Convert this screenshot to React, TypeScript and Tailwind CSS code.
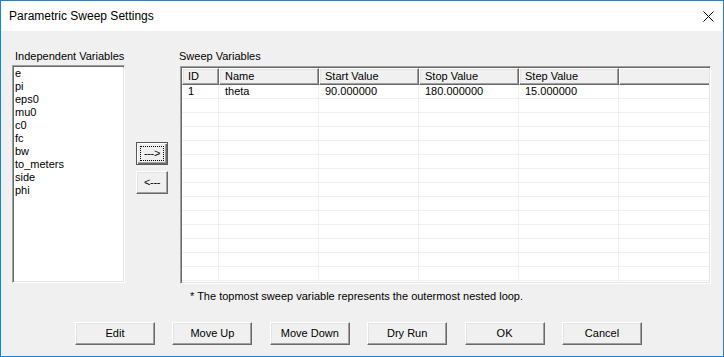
import React from 'react';

const variables = ['e', 'pi', 'eps0', 'mu0', 'c0', 'fc', 'bw', 'to_meters', 'side', 'phi'];

const columns = [
  { header: 'ID', width: 'w-[37px]' },
  { header: 'Name', width: 'w-[100px]' },
  { header: 'Start Value', width: 'w-[100px]' },
  { header: 'Stop Value', width: 'w-[100px]' },
  { header: 'Step Value', width: 'w-[100px]' },
];

const rows = [['1', 'theta', '90.000000', '180.000000', '15.000000']];

const raised =
  'bg-[#f0f0f0] border border-t-white border-l-white border-r-[#696969] border-b-[#696969] shadow-[inset_-1px_-1px_#a0a0a0,inset_1px_1px_#e3e3e3]';

const sunken =
  'bg-white border border-t-[#a0a0a0] border-l-[#a0a0a0] border-r-white border-b-white shadow-[inset_1px_1px_#696969,inset_-1px_-1px_#e3e3e3]';

function DlgButton({ label }: { label: string }) {
  return (
    <button className={`${raised} w-[80px] h-[23px] flex items-center justify-center text-[11px] leading-none whitespace-nowrap`}>
      {label}
    </button>
  );
}

export default function App() {
  return (
    <div className="w-[724px] h-[357px] border border-[#1883d7] flex flex-col bg-[#f0f0f0] overflow-hidden font-['Liberation_Sans',Arial,sans-serif] text-[11px] text-black">
      {/* title bar */}
      <div className="h-[30px] shrink-0 bg-white flex items-center justify-between pl-[8px] pr-[8px]">
        <span className="text-[12px]">Parametric Sweep Settings</span>
        <svg width="11" height="11" viewBox="0 0 11 11" className="mr-[1px]">
          <path d="M0.5 0.5 L10.5 10.5 M10.5 0.5 L0.5 10.5" stroke="#000" strokeWidth="1" />
        </svg>
      </div>

      <div className="flex-1 pt-[19px]">
        <div className="flex pl-[11px]">
          {/* independent variables */}
          <div className="w-[113px] flex flex-col">
            <div className="h-[13px] leading-[13px] pl-[3px]">Independent Variables</div>
            <div className={`${sunken} mt-[2px] h-[218px] pt-[1px] pl-[2px]`}>
              {variables.map((v) => (
                <div key={v} className="h-[13px] leading-[13px]">{v}</div>
              ))}
            </div>
          </div>

          {/* add / remove */}
          <div className="ml-[11px] w-[32px] flex flex-col">
            <button className="mt-[92px] h-[23px] w-[32px] p-[3px] bg-[#f0f0f0] border border-[#5a5a5a] shadow-[inset_1px_1px_white,inset_-1px_-1px_#696969,inset_-2px_-2px_#a0a0a0]">
              <span className="w-full h-full flex items-center justify-center border border-dotted border-black text-[11px] leading-none whitespace-nowrap tracking-[-0.3px]">
                ---&gt;
              </span>
            </button>
            <button className={`${raised} mt-[6px] h-[23px] w-[32px] flex items-center justify-center text-[11px] leading-none whitespace-nowrap tracking-[-0.3px]`}>
              &lt;---
            </button>
          </div>

          {/* sweep variables */}
          <div className="ml-[12px] flex flex-col">
            <div className="h-[13px] leading-[13px] -ml-[1px]">Sweep Variables</div>
            <div className={`${sunken} mt-[3px] w-[531px] h-[218px] p-[1px] overflow-hidden`}>
              <div className="flex h-[17px]">
                {columns.map((c) => (
                  <div key={c.header} className={`${raised} ${c.width} h-[17px] pl-[5px] flex items-center leading-none`}>
                    {c.header}
                  </div>
                ))}
                <div className="flex-1 h-[17px] bg-[#f0f0f0] border-l border-t border-b border-t-white border-l-white border-b-[#696969] shadow-[inset_0_-1px_#a0a0a0]" />
              </div>
              {Array.from({ length: 15 }).map((_, i) => (
                <div key={i} className="flex h-[14px] border-b border-[#f0f0f0]">
                  {columns.map((c, j) => (
                    <div key={j} className={`${c.width} h-full pl-[6px] flex items-center border-r border-[#f0f0f0] leading-none`}>
                      {rows[i] ? rows[i][j] : ''}
                    </div>
                  ))}
                  <div className="flex-1" />
                </div>
              ))}
            </div>
            <div className="mt-[6px] h-[13px] leading-[13px] pl-[10px]">
              * The topmost sweep variable represents the outermost nested loop.
            </div>
          </div>
        </div>

        {/* dialog buttons */}
        <div className="mt-[19px] pl-[74px] flex gap-[17.4px]">
          {['Edit', 'Move Up', 'Move Down', 'Dry Run', 'OK', 'Cancel'].map((b) => (
            <DlgButton key={b} label={b} />
          ))}
        </div>
      </div>
    </div>
  );
}
